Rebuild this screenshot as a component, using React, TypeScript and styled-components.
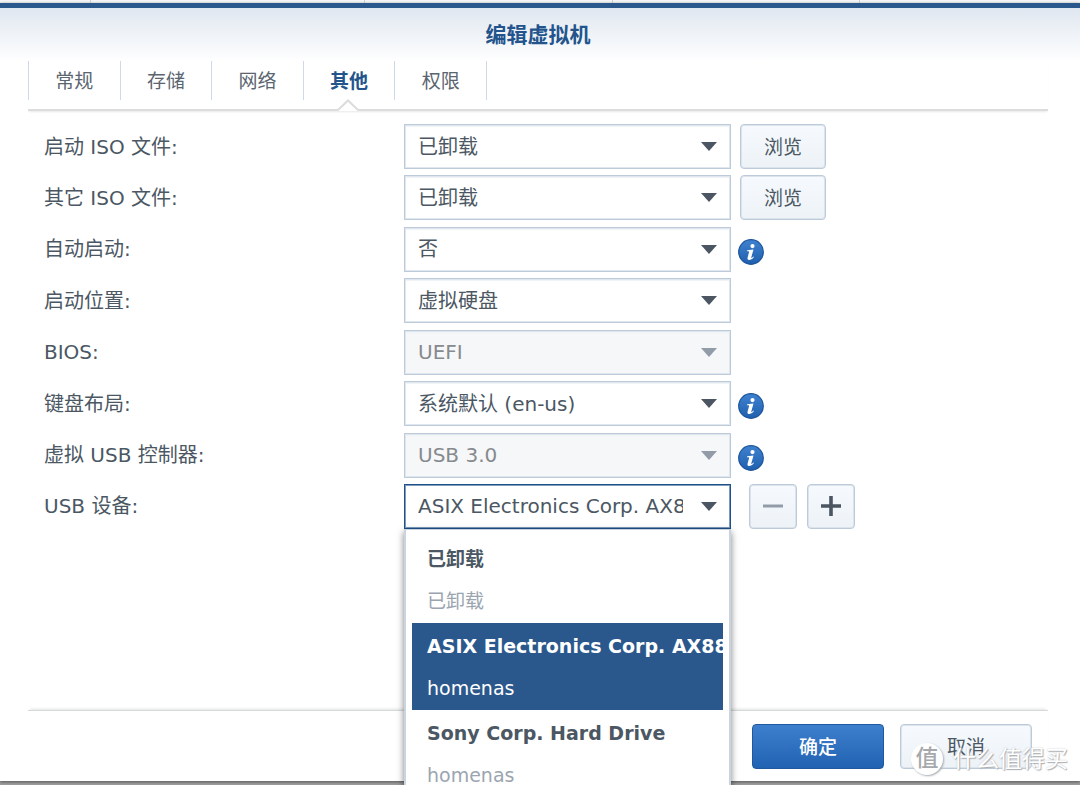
import React, { useState } from "react";
import styled, { createGlobalStyle, css } from "styled-components";

const GlobalStyle = createGlobalStyle`
  *, *::before, *::after { box-sizing: border-box; }
  body {
    margin: 0;
    background: #9f9f9f;
    color: #4b5763;
    font-family: "DejaVu Sans", "Noto Sans CJK SC", sans-serif;
    font-size: 19px;
    line-height: 28px;
  }
  button, select { font: inherit; color: inherit; }
`;

const Page = styled.div`
  position: relative;
  display: flex;
  flex-direction: column;
  min-height: 100vh;
  overflow: hidden;
`;

const BackStrip = styled.div`
  display: grid;
  grid-template-columns: 91px 274px 248px 247px 1fr;
  height: 3px;
  background: #f6f6f6;
`;

const BackCell = styled.span`
  border-right: 1px solid #cbd2da;
`;

const Dialog = styled.main`
  flex: 1;
  display: flex;
  flex-direction: column;
  margin-bottom: 4px;
  border-top: 5px solid #2a588d;
  background: linear-gradient(#e0e7f0, #ffffff 54px) #ffffff;
  box-shadow: 0 1px 3px #555555;
`;

const Title = styled.h1`
  margin: 0;
  padding: 13px 4px 12px 0;
  color: #23548c;
  font-size: 21px;
  line-height: 28px;
  font-weight: 700;
  text-align: center;
`;

const TabBar = styled.nav`
  margin: 0 32px 0 28px;
  padding-bottom: 9px;
  border-bottom: 2px solid #dcdcdc;
  box-shadow: 0 2px 2px -1px #e8e8e8;
`;

const TabList = styled.div`
  display: flex;
  width: 459px;
  height: 39px;
  border-right: 1px solid #ccdaea;
`;

const Tab = styled.button<{ $active: boolean }>`
  position: relative;
  flex: 1;
  padding: 0;
  border: 0;
  border-left: 1px solid #ccdaea;
  background: none;
  color: ${(p) => (p.$active ? "#23548c" : "#5a6570")};
  font-weight: ${(p) => (p.$active ? 700 : 400)};
  cursor: pointer;
`;

const TabPointer = styled.svg`
  position: absolute;
  top: 38px;
  left: 50%;
  width: 22px;
  height: 12px;
  margin-left: -12px;
`;

const Form = styled.form`
  flex: 1;
  display: flex;
  flex-direction: column;
`;

const Fields = styled.div`
  flex: 1;
  padding: 13px 32px 0 44px;
`;

const Rows = styled.div`
  display: flex;
  flex-direction: column;
  justify-content: space-between;
  height: 405px;
`;

const Row = styled.div`
  display: grid;
  grid-template-columns: 360px 327px auto;
  justify-content: start;
  align-items: center;
  height: 45px;
`;

const Label = styled.label`
  font-size: 20px;
`;

const Extras = styled.div<{ $inset: number }>`
  display: flex;
  gap: 10px;
  padding-left: ${(p) => p.$inset}px;
`;

const SelectBox = styled.div`
  position: relative;
`;

const Select = styled.select`
  display: block;
  width: 100%;
  height: 45px;
  padding: 0 47px 0 13px;
  border: 1px solid #bccada;
  border-radius: 0;
  outline: 0;
  appearance: none;
  background: #ffffff;
  box-shadow: inset 0 0 0 1px #dfe6ed, inset 0 3px 1px -1px #f0f3f6;
  font-size: 20px;

  &:disabled {
    background: #f6f7f9;
    color: #868a8e;
    opacity: 1;
  }

  &[data-open="true"] {
    border-color: #1f5089;
    box-shadow: inset 0 0 0 1px #7d9bbd;
  }
`;

const Arrow = styled.svg<{ $muted: boolean }>`
  position: absolute;
  top: 18px;
  right: 14px;
  width: 16px;
  height: 9px;
  fill: ${(p) => (p.$muted ? "#929ca8" : "#4b5662")};
  pointer-events: none;
`;

const Button = styled.button<{ $width: number; $primary?: boolean }>`
  width: ${(p) => p.$width}px;
  height: 45px;
  padding: 0;
  display: grid;
  place-items: center;
  border: 1px solid #bccada;
  border-radius: 4px;
  background: linear-gradient(#f6faff, #edf2f7);
  box-shadow: inset 0 0 0 1px #dbe3eb;
  cursor: pointer;
  ${(p) =>
    p.$primary &&
    css`
      border-color: #1d58a1;
      background: linear-gradient(#3d7fcd, #2262b2);
      box-shadow: none;
      color: #ffffff;
      font-weight: 500;
    `}
`;

const InfoButton = styled.button`
  display: block;
  width: 26px;
  height: 26px;
  margin-top: 5px;
  padding: 0;
  border: 0;
  background: none;
`;

const Menu = styled.ul`
  position: absolute;
  z-index: 2;
  top: 45px;
  left: 0;
  right: 0;
  margin: 0;
  padding: 6px;
  border: 2px solid #c9d4e0;
  border-top-width: 1px;
  background: #ffffff;
  box-shadow: 0 3px 7px rgba(0, 0, 0, 0.5);
  list-style: none;
`;

const Option = styled.li<{ $selected: boolean }>`
  padding: 2px 0 1px 15px;
  overflow: hidden;
  white-space: nowrap;
  line-height: 42px;
  background: ${(p) => (p.$selected ? "#2a588c" : "#ffffff")};
  color: ${(p) => (p.$selected ? "#ffffff" : "#4b5763")};
  cursor: pointer;
`;

const OptionName = styled.strong`
  display: block;
`;

const OptionHost = styled.span<{ $selected: boolean }>`
  display: block;
  color: ${(p) => (p.$selected ? "#ffffff" : "#9ba5b0")};
`;

const Footer = styled.footer`
  display: flex;
  justify-content: flex-end;
  gap: 16px;
  margin: 0 32px 0 28px;
  padding: 13px 16px 12px;
  border-top: 1px solid #d5dad9;
  box-shadow: 0 -3px 3px -2px #dfe3e2;
`;

const Watermark = styled.div`
  position: absolute;
  z-index: 3;
  right: 12px;
  bottom: 9px;
  display: flex;
  align-items: center;
  gap: 10px;
  color: #ffffff;
  font-size: 23px;
  line-height: 34px;
  text-shadow: 1px 1px 1px #a9adb1, 0 0 2px #c3c7cb;
  pointer-events: none;
`;

const Seal = styled.span`
  width: 32px;
  height: 32px;
  border-radius: 50%;
  background: #ffffff;
  box-shadow: 1px 1px 2px #a9adb1;
  color: #a6a9ac;
  font-size: 23px;
  line-height: 30px;
  font-weight: 500;
  text-align: center;
  text-shadow: none;
`;

const Info = ({ about }: { about: string }) => (
  <InfoButton type="button" aria-label={about}>
    <svg width="26" height="26" viewBox="0 0 26 26">
      <defs>
        <linearGradient id="infoFill" x1="0" y1="0" x2="0" y2="1">
          <stop offset="0" stopColor="#3f82d0" />
          <stop offset="1" stopColor="#1f5fae" />
        </linearGradient>
      </defs>
      <circle cx="13" cy="13" r="12.3" fill="url(#infoFill)" stroke="#1c559c" strokeWidth="1.2" />
      <circle cx="14.5" cy="7.1" r="2.1" fill="#fff" />
      <path
        d="M9.2 11.2 15.5 10.4 13.4 17.9Q13.1 19.1 13.7 19.1 14.2 19 15.2 17.6L16 18.1Q14 21.1 11.5 21.1 8.9 21 9.6 18.5L11.1 13Q11.3 12.2 10.5 12.2L9 12.2Z"
        fill="#fff"
      />
    </svg>
  </InfoButton>
);

type Field = {
  id: string;
  label: string;
  value: string;
  disabled?: boolean;
  extra?: "browse" | "info" | "usb";
};

const FIELDS: Field[] = [
  { id: "boot-iso", label: "启动 ISO 文件:", value: "已卸载", extra: "browse" },
  { id: "other-iso", label: "其它 ISO 文件:", value: "已卸载", extra: "browse" },
  { id: "autostart", label: "自动启动:", value: "否", extra: "info" },
  { id: "boot-from", label: "启动位置:", value: "虚拟硬盘" },
  { id: "bios", label: "BIOS:", value: "UEFI", disabled: true },
  { id: "keyboard", label: "键盘布局:", value: "系统默认 (en-us)", extra: "info" },
  { id: "usb-controller", label: "虚拟 USB 控制器:", value: "USB 3.0", disabled: true, extra: "info" },
  { id: "usb-device", label: "USB 设备:", value: "ASIX Electronics Corp. AX88", extra: "usb" },
];

const DEVICES = [
  { name: "已卸载", host: "已卸载" },
  { name: "ASIX Electronics Corp. AX88", host: "homenas" },
  { name: "Sony Corp. Hard Drive", host: "homenas" },
];

const TABS = ["常规", "存储", "网络", "其他", "权限"];

const FieldRow = ({ field }: { field: Field }) => {
  const [device, setDevice] = useState(field.value);
  const open = field.extra === "usb";
  const choices = open ? DEVICES.map((d) => d.name) : [field.value];
  return (
    <Row>
      <Label htmlFor={field.id}>{field.label}</Label>
      <SelectBox>
        <Select
          id={field.id}
          value={device}
          disabled={field.disabled}
          data-open={open}
          onChange={(e) => setDevice(e.target.value)}
        >
          {choices.map((c) => (
            <option key={c}>{c}</option>
          ))}
        </Select>
        <Arrow $muted={!!field.disabled} viewBox="0 0 16 9" aria-hidden="true">
          <path d="M0 0H16L8 9Z" />
        </Arrow>
        {open && (
          <Menu role="listbox" aria-label={field.label}>
            {DEVICES.map((d) => (
              <Option
                key={d.name}
                role="option"
                aria-selected={d.name === device}
                $selected={d.name === device}
                onClick={() => setDevice(d.name)}
              >
                <OptionName>{d.name}</OptionName>
                <OptionHost $selected={d.name === device}>{d.host}</OptionHost>
              </Option>
            ))}
          </Menu>
        )}
      </SelectBox>
      {field.extra === "browse" && (
        <Extras $inset={9}>
          <Button type="button" $width={86}>浏览</Button>
        </Extras>
      )}
      {field.extra === "info" && (
        <Extras $inset={7}>
          <Info about={field.label} />
        </Extras>
      )}
      {field.extra === "usb" && (
        <Extras $inset={18}>
          <Button type="button" $width={48} aria-label="-">
            <svg width="20" height="20" viewBox="0 0 20 20">
              <path d="M0 10H20" stroke="#929ca8" strokeWidth="3" />
            </svg>
          </Button>
          <Button type="button" $width={48} aria-label="+">
            <svg width="20" height="20" viewBox="0 0 20 20">
              <path d="M0 10H20M10 0V20" stroke="#4b5662" strokeWidth="3.6" />
            </svg>
          </Button>
        </Extras>
      )}
    </Row>
  );
};

export default function App() {
  const [tab, setTab] = useState("其他");
  return (
    <Page>
      <GlobalStyle />
      <BackStrip>
        <BackCell />
        <BackCell />
        <BackCell />
        <BackCell />
      </BackStrip>
      <Dialog>
        <Title>编辑虚拟机</Title>
        <TabBar>
          <TabList role="tablist">
            {TABS.map((t) => (
              <Tab
                key={t}
                type="button"
                role="tab"
                aria-selected={t === tab}
                $active={t === tab}
                onClick={() => setTab(t)}
              >
                {t}
                {t === tab && (
                  <TabPointer viewBox="0 0 22 12" aria-hidden="true">
                    <path d="M1 12 11 1.5 21 12Z" fill="#fff" />
                    <path d="M1 11 11 1.5 21 11" fill="none" stroke="#dcdcdc" strokeWidth="2" />
                  </TabPointer>
                )}
              </Tab>
            ))}
          </TabList>
        </TabBar>
        <Form onSubmit={(e) => e.preventDefault()}>
          <Fields>
            <Rows>
              {FIELDS.map((f) => (
                <FieldRow key={f.id} field={f} />
              ))}
            </Rows>
          </Fields>
          <Footer>
            <Button type="submit" $width={132} $primary>确定</Button>
            <Button type="button" $width={132}>取消</Button>
          </Footer>
        </Form>
      </Dialog>
      <Watermark>
        <Seal>值</Seal>
        什么值得买
      </Watermark>
    </Page>
  );
}
